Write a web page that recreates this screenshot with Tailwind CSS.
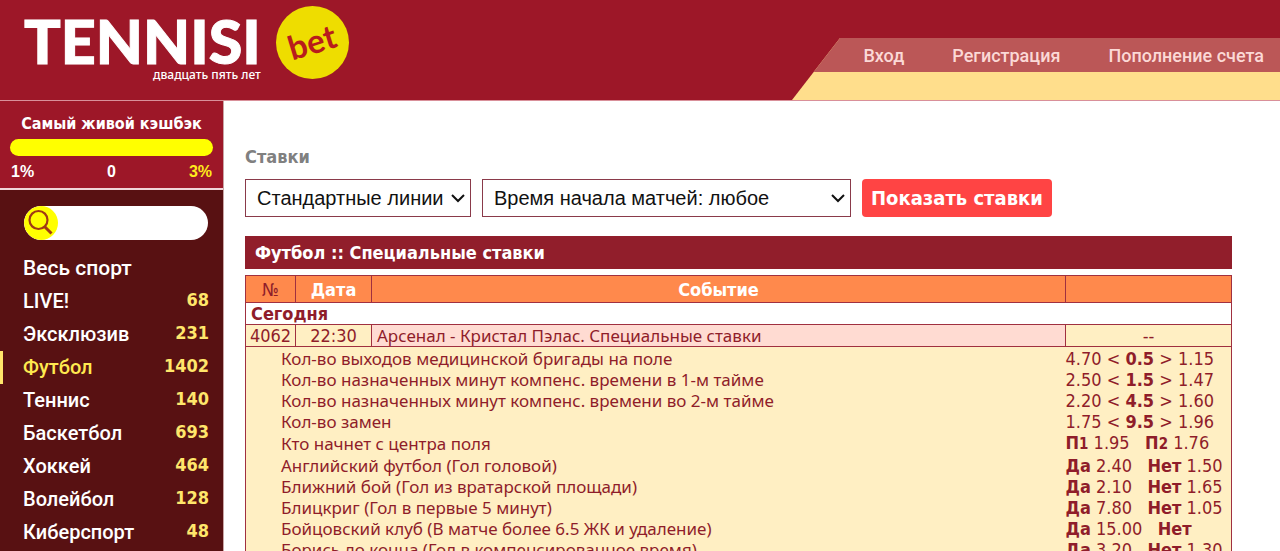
<!DOCTYPE html>
<html lang="ru">
<head>
<meta charset="utf-8">
<meta name="viewport" content="width=device-width, initial-scale=1">
<title>TENNISI bet</title>
<script src="https://cdn.jsdelivr.net/npm/@tailwindcss/browser@4"></script>
</head>
<body class="bg-white font-['DejaVu_Sans_Condensed','DejaVu_Sans',sans-serif] text-[#8f1d2a]">
<div class="flex h-screen flex-col overflow-hidden">

<header class="flex shrink-0 items-start justify-between border-b border-[#d9909a] bg-[#9d1728]">
  <a href="#" class="flex items-start gap-[15px] pt-[6px] pl-[24px] text-white">
    <span class="flex flex-col items-end pt-[8px]">
      <span class="font-['Lato',sans-serif] text-[61px] leading-[54px] font-black [-webkit-text-stroke:1px_white]">TENNISI</span>
      <span class="font-['Noto_Sans',sans-serif] text-[12px] leading-[14px] font-medium">двадцать пять лет</span>
    </span>
    <span class="flex size-[73px] items-center justify-center rounded-full bg-[#eedd00]">
      <span class="-rotate-[17deg] pb-[4px] font-['Lato',sans-serif] text-[33px] leading-[36px] font-bold text-[#b81c1c]">bet</span>
    </span>
  </a>
  <nav class="mt-[38px] w-[488px] shrink-0 bg-[#ffde8c] font-['Roboto',sans-serif] text-[18px] font-medium text-[#fbd9d6] [clip-path:polygon(48px_0,100%_0,100%_100%,0_100%)]">
    <div class="flex h-[34px] items-center justify-end gap-[48px] bg-[#bb5757] pr-[16px]">
      <a href="#">Вход</a>
      <a href="#">Регистрация</a>
      <a href="#">Пополнение счета</a>
    </div>
    <div class="h-[28px]"></div>
  </nav>
</header>

<div class="flex min-h-0 grow">
  <aside class="flex w-[224px] shrink-0 flex-col border-r border-[#c9a5a5] bg-[#581112] text-white">
    <section class="border-b-2 border-[#f0d5d8] bg-[#9d1728] px-[10px] pt-[12px] pb-[6px]">
      <h2 class="text-center text-[16px] leading-[22px] font-bold">Самый живой кэшбэк</h2>
      <div class="mt-[4px] h-[17px] rounded-full bg-[#ffff00]"></div>
      <div class="mt-[5px] flex justify-between px-[1px] font-['Liberation_Sans',Arial,sans-serif] text-[16px] leading-[21px] font-bold">
        <span>1%</span><span>0</span><span class="text-[#ffea1c]">3%</span>
      </div>
    </section>
    <form class="mx-[24px] mt-[16px] mr-[15px] flex h-[34px] shrink-0 overflow-hidden rounded-full bg-white">
      <button type="button" aria-label="Поиск" class="size-[34px] shrink-0 rounded-full bg-[#ffff00]">
        <svg viewBox="0 0 34 34" class="size-[34px]" fill="none" stroke="#a03a14"><circle cx="14.5" cy="14" r="9" stroke-width="2.2"/><path d="M20.5 20.5 27.5 27.5" stroke-width="3"/></svg>
      </button>
      <input type="text" aria-label="Поиск по сайту" class="min-w-0 grow px-2 text-[16px] text-black outline-none">
    </form>
    <ul class="mt-[12px] text-[20px] leading-[33px] *:border-l-3 *:border-transparent *:pr-[14px] *:pl-[20px] [&_a]:flex [&_a]:justify-between [&_b]:-mt-[2px] [&_b]:text-[18px] [&_b]:text-[#ffe66b] [&_span]:font-['Roboto',sans-serif] [&_span]:font-medium">
      <li><a href="#"><span class="text-[21px]">Весь спорт</span></a></li>
      <li><a href="#"><span>LIVE!</span><b>68</b></a></li>
      <li><a href="#"><span>Эксклюзив</span><b>231</b></a></li>
      <li class="border-[#ffe66b]! text-[#ffe94f]"><a href="#"><span>Футбол</span><b>1402</b></a></li>
      <li><a href="#"><span>Теннис</span><b>140</b></a></li>
      <li><a href="#"><span>Баскетбол</span><b>693</b></a></li>
      <li><a href="#"><span>Хоккей</span><b>464</b></a></li>
      <li><a href="#"><span>Волейбол</span><b>128</b></a></li>
      <li><a href="#"><span>Киберспорт</span><b>48</b></a></li>
    </ul>
  </aside>

  <main class="min-w-0 grow pt-[44px] pr-[48px] pl-[21px]">
    <h1 class="text-[18px] leading-[24px] font-bold text-[#808080]">Ставки</h1>
    <form class="mt-[10px] flex gap-[11px]">
      <div class="relative w-[226px]">
        <select aria-label="Линии" class="h-[38px] w-full appearance-none border border-[#8a3a4a] bg-white pl-[11px] font-['Liberation_Sans',Arial,sans-serif] text-[20px] text-[#111]"><option>Стандартные линии</option></select>
        <svg class="pointer-events-none absolute top-[14px] right-[6px] h-[10px] w-[14px]" viewBox="0 0 14 10" fill="none" stroke="#111" stroke-width="2"><path d="M1 2 7 8 13 2"/></svg>
      </div>
      <div class="relative w-[369px]">
        <select aria-label="Время начала матчей" class="h-[38px] w-full appearance-none border border-[#8a3a4a] bg-white pl-[11px] font-['Liberation_Sans',Arial,sans-serif] text-[20px] text-[#111]"><option>Время начала матчей: любое</option></select>
        <svg class="pointer-events-none absolute top-[14px] right-[6px] h-[10px] w-[14px]" viewBox="0 0 14 10" fill="none" stroke="#111" stroke-width="2"><path d="M1 2 7 8 13 2"/></svg>
      </div>
      <button type="button" class="h-[38px] rounded-[4px] bg-[#ff4444] px-[9px] text-[20px] font-bold whitespace-nowrap text-white">Показать ставки</button>
    </form>
    <h2 class="mt-[19px] bg-[#911e2b] px-[10px] text-[18px] leading-[33px] font-bold text-white">Футбол :: Специальные ставки</h2>

    <table class="mt-[6px] w-full table-fixed border-collapse border border-[#a03040] bg-[#ffefc3] text-[18px] leading-[21px]">
      <colgroup><col class="w-[50px]"><col class="w-[76px]"><col><col class="w-[166px]"></colgroup>
      <thead>
        <tr class="h-[27px] bg-[#ff894c] text-white *:border *:border-[#a03040] *:p-0">
          <th class="font-normal text-[#8f1d2a]">№</th><th>Дата</th><th>Событие</th><th></th>
        </tr>
      </thead>
      <tbody>
        <tr class="h-[22px] bg-white"><th colspan="4" class="border border-[#a03040] p-0 pl-[5px] text-left">Сегодня</th></tr>
        <tr class="h-[22px] text-center *:border *:border-[#a03040] *:p-0">
          <td>4062</td><td>22:30</td><td class="bg-[#ffdbd2] pl-[5px]! text-left font-['Noto_Sans',sans-serif] text-[17px]">Арсенал - Кристал Пэлас. Специальные ставки</td><td>--</td>
        </tr>
      </tbody>
      <tbody class="[&_td]:p-0 [&_td]:whitespace-pre [&_td:first-child]:pl-[35px] [&_td:first-child]:font-['Noto_Sans',sans-serif] [&_td:first-child]:text-[17px] [&_tr:first-child_td]:pt-[1px]">
        <tr><td colspan="3">Кол-во выходов медицинской бригады на поле</td><td>4.70 &lt; <b>0.5</b> &gt; 1.15</td></tr>
        <tr><td colspan="3">Кол-во назначенных минут компенс. времени в 1-м тайме</td><td>2.50 &lt; <b>1.5</b> &gt; 1.47</td></tr>
        <tr><td colspan="3">Кол-во назначенных минут компенс. времени во 2-м тайме</td><td>2.20 &lt; <b>4.5</b> &gt; 1.60</td></tr>
        <tr><td colspan="3">Кол-во замен</td><td>1.75 &lt; <b>9.5</b> &gt; 1.96</td></tr>
        <tr><td colspan="3">Кто начнет с центра поля</td><td><b>П<span class="text-[15px]">1</span></b> 1.95   <b>П<span class="text-[15px]">2</span></b> 1.76</td></tr>
        <tr><td colspan="3">Английский футбол (Гол головой)</td><td><b>Да</b> 2.40   <b>Нет</b> 1.50</td></tr>
        <tr><td colspan="3">Ближний бой (Гол из вратарской площади)</td><td><b>Да</b> 2.10   <b>Нет</b> 1.65</td></tr>
        <tr><td colspan="3">Блицкриг (Гол в первые 5 минут)</td><td><b>Да</b> 7.80   <b>Нет</b> 1.05</td></tr>
        <tr><td colspan="3">Бойцовский клуб (В матче более 6.5 ЖК и удаление)</td><td><b>Да</b> 15.00   <b>Нет</b></td></tr>
        <tr><td colspan="3">Борись до конца (Гол в компенсированное время)</td><td><b>Да</b> 3.20   <b>Нет</b> 1.30</td></tr>
      </tbody>
    </table>
  </main>
</div>
</div>
</body>
</html>
